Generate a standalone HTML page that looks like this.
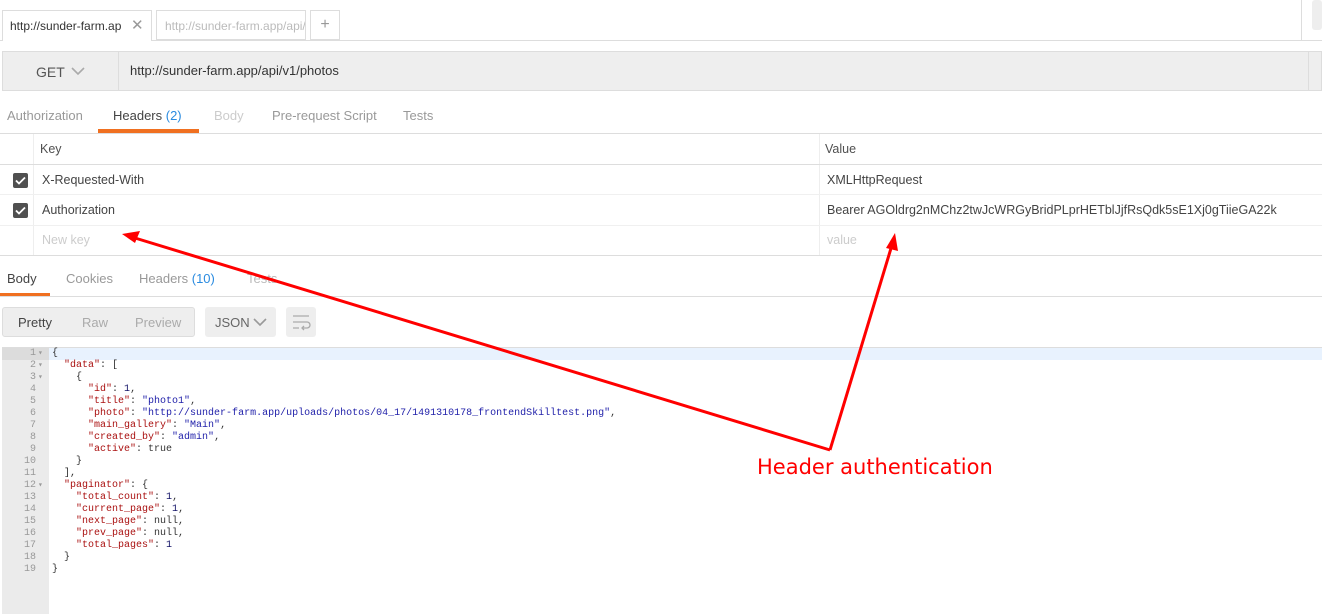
<!DOCTYPE html>
<html><head><style>
*{margin:0;padding:0;box-sizing:border-box}
body{width:1322px;height:614px;overflow:hidden;background:#fff;font-family:"Liberation Sans","DejaVu Sans",sans-serif;font-size:12.5px;color:#505050;position:relative}
.a{position:absolute}
.mono{font-family:"Liberation Mono","DejaVu Sans Mono",monospace;font-size:10px;line-height:12px;white-space:pre}
.k{color:#a11}
.s{color:#22a}
.n{color:#116}
.chk{position:absolute;left:13px;width:15px;height:15px;background:#505050;border-radius:2px}
.chk svg{position:absolute;left:2px;top:3px}
</style></head><body>
<!-- tabs -->
<div class="a" style="left:0;top:40px;width:1322px;height:1px;background:#ddd"></div>
<div class="a" style="left:2px;top:10px;width:150px;height:31px;border:1px solid #ddd;border-bottom:none;background:#fff"></div>
<div class="a" style="left:10px;top:19px;color:#333;font-size:12px">http://sunder-farm.ap</div>
<div class="a" style="left:131px;top:16px;color:#999;font-size:15px">✕</div>
<div class="a" style="left:156px;top:10px;width:150px;height:30px;border:1px solid #ddd;background:#fff;overflow:hidden"><div style="padding:8px 0 0 8px;color:#bbb;white-space:nowrap;font-size:12px">http://sunder-farm.app/api/v</div></div>
<div class="a" style="left:310px;top:10px;width:30px;height:30px;border:1px solid #ddd;text-align:center;color:#999;font-size:16px;line-height:28px">+</div>
<div class="a" style="left:1301px;top:0;width:1px;height:40px;background:#ddd"></div>
<div class="a" style="left:1312px;top:0;width:10px;height:30px;background:#eee;border-radius:3px"></div>
<!-- url bar -->
<div class="a" style="left:2px;top:51px;width:1320px;height:40px;background:#eee;border:1px solid #ddd"></div>
<div class="a" style="left:118px;top:52px;width:1px;height:38px;background:#ddd"></div>
<div class="a" style="left:1308px;top:52px;width:1px;height:38px;background:#ddd"></div>
<div class="a" style="left:36px;top:64px;font-size:14px;color:#555">GET</div>
<svg class="a" style="left:71px;top:67px" width="14" height="9"><path d="M1 1l6 6 6-6" stroke="#aaa" stroke-width="1.6" fill="none"/></svg>
<div class="a" style="left:130px;top:63px;color:#333;font-size:13px">http://sunder-farm.app/api/v1/photos</div>
<!-- req tabs -->
<div class="a" style="left:7px;top:108px;color:#999;font-size:13px">Authorization</div>
<div class="a" style="left:113px;top:108px;color:#444;font-size:13px">Headers <span style="color:#2a8be0">(2)</span></div>
<div class="a" style="left:98px;top:129px;width:101px;height:4px;background:#f07020"></div>
<div class="a" style="left:214px;top:108px;color:#ccc;font-size:13px">Body</div>
<div class="a" style="left:272px;top:108px;color:#999;font-size:13px">Pre-request Script</div>
<div class="a" style="left:403px;top:108px;color:#999;font-size:13px">Tests</div>
<div class="a" style="left:0;top:133px;width:1322px;height:1px;background:#ddd"></div>
<!-- table -->
<div class="a" style="left:33px;top:134px;width:1px;height:121px;background:#eee"></div>
<div class="a" style="left:819px;top:134px;width:1px;height:121px;background:#eee"></div>
<div class="a" style="left:0;top:164px;width:1322px;height:1px;background:#ddd"></div>
<div class="a" style="left:0;top:194px;width:1322px;height:1px;background:#f0f0f0"></div>
<div class="a" style="left:0;top:225px;width:1322px;height:1px;background:#f0f0f0"></div>
<div class="a" style="left:0;top:255px;width:1322px;height:1px;background:#ddd"></div>
<div class="a" style="left:40px;top:142px">Key</div>
<div class="a" style="left:825px;top:142px">Value</div>
<div class="chk" style="top:173px"><svg width="11" height="9"><path d="M1 4.5l3 3 6-6" stroke="#fff" stroke-width="1.8" fill="none"/></svg></div>
<div class="chk" style="top:203px"><svg width="11" height="9"><path d="M1 4.5l3 3 6-6" stroke="#fff" stroke-width="1.8" fill="none"/></svg></div>
<div class="a" style="left:42px;top:173px;color:#444">X-Requested-With</div>
<div class="a" style="left:42px;top:203px;color:#444">Authorization</div>
<div class="a" style="left:42px;top:233px;color:#ccc">New key</div>
<div class="a" style="left:827px;top:173px;color:#444">XMLHttpRequest</div>
<div class="a" style="left:827px;top:203px;color:#444">Bearer AGOldrg2nMChz2twJcWRGyBridPLprHETblJjfRsQdk5sE1Xj0gTiieGA22k</div>
<div class="a" style="left:827px;top:233px;color:#ccc">value</div>
<!-- response tabs -->
<div class="a" style="left:7px;top:271px;color:#444;font-size:13px">Body</div>
<div class="a" style="left:0;top:293px;width:50px;height:3px;background:#f07020"></div>
<div class="a" style="left:66px;top:271px;color:#999;font-size:13px">Cookies</div>
<div class="a" style="left:139px;top:271px;color:#999;font-size:13px">Headers <span style="color:#2a8be0">(10)</span></div>
<div class="a" style="left:247px;top:271px;color:#bbb;font-size:13px">Tests</div>
<div class="a" style="left:0;top:296px;width:1322px;height:1px;background:#ddd"></div>
<div class="a" style="left:2px;top:307px;width:193px;height:30px;background:#eee;border:1px solid #ddd;border-radius:3px"></div>
<div class="a" style="left:18px;top:315px;color:#444;font-size:13px">Pretty</div>
<div class="a" style="left:82px;top:315px;color:#aaa;font-size:13px">Raw</div>
<div class="a" style="left:135px;top:315px;color:#aaa;font-size:13px">Preview</div>
<div class="a" style="left:205px;top:307px;width:71px;height:30px;background:#eee;border-radius:3px"></div>
<div class="a" style="left:215px;top:315px;color:#666;font-size:13px">JSON</div>
<svg class="a" style="left:253px;top:318px" width="14" height="9"><path d="M1 1l6 6 6-6" stroke="#999" stroke-width="1.6" fill="none"/></svg>
<div class="a" style="left:286px;top:307px;width:30px;height:30px;background:#eee;border-radius:3px"></div>
<svg class="a" style="left:291px;top:313px" width="22" height="18"><path d="M2 3h16M2 9h14a3 3 0 0 1 0 6h-4M2 15h6" stroke="#aaa" stroke-width="1.3" fill="none"/><path d="M13 13l-2 2 2 2" stroke="#aaa" stroke-width="1.3" fill="none"/></svg>
<!-- code -->
<div class="a" style="left:2px;top:347px;width:1320px;height:1px;background:#ddd"></div>
<div class="a" style="left:2px;top:348px;width:47px;height:266px;background:#ebebeb"></div>
<div class="a" style="left:2px;top:348px;width:47px;height:12px;background:#dcdcdc"></div>
<div class="a" style="left:49px;top:348px;width:1273px;height:12px;background:#e8f2fe"></div>
<div class="a mono" style="left:2px;top:348px;width:34px;text-align:right;color:#999">1
2
3
4
5
6
7
8
9
10
11
12
13
14
15
16
17
18
19</div>
<div class="a mono" style="left:38px;top:348px;color:#999;font-size:8px;line-height:12px">▾
▾
▾
 
 
 
 
 
 
 
 
▾</div>
<div class="a mono" style="left:52px;top:348px;color:#333">{
  <span class="k">"data"</span>: [
    {
      <span class="k">"id"</span>: <span class="n">1</span>,
      <span class="k">"title"</span>: <span class="s">"photo1"</span>,
      <span class="k">"photo"</span>: <span class="s">"http://sunder-farm.app/uploads/photos/04_17/1491310178_frontendSkilltest.png"</span>,
      <span class="k">"main_gallery"</span>: <span class="s">"Main"</span>,
      <span class="k">"created_by"</span>: <span class="s">"admin"</span>,
      <span class="k">"active"</span>: true
    }
  ],
  <span class="k">"paginator"</span>: {
    <span class="k">"total_count"</span>: <span class="n">1</span>,
    <span class="k">"current_page"</span>: <span class="n">1</span>,
    <span class="k">"next_page"</span>: null,
    <span class="k">"prev_page"</span>: null,
    <span class="k">"total_pages"</span>: <span class="n">1</span>
  }
}</div>
<!-- annotation -->
<svg class="a" style="left:0;top:0" width="1322" height="614">
<path d="M830 450L135 238" stroke="#f00" stroke-width="3"/>
<path d="M122 234l18-3-5 12z" fill="#f00"/>
<path d="M830 450L892 245" stroke="#f00" stroke-width="3"/>
<path d="M895 233l3 18-12-3z" fill="#f00"/>
</svg>
<div class="a" style="left:757px;top:455px;color:#f00;font-size:21px;font-family:'DejaVu Sans',sans-serif">Header authentication</div>
</body></html>
